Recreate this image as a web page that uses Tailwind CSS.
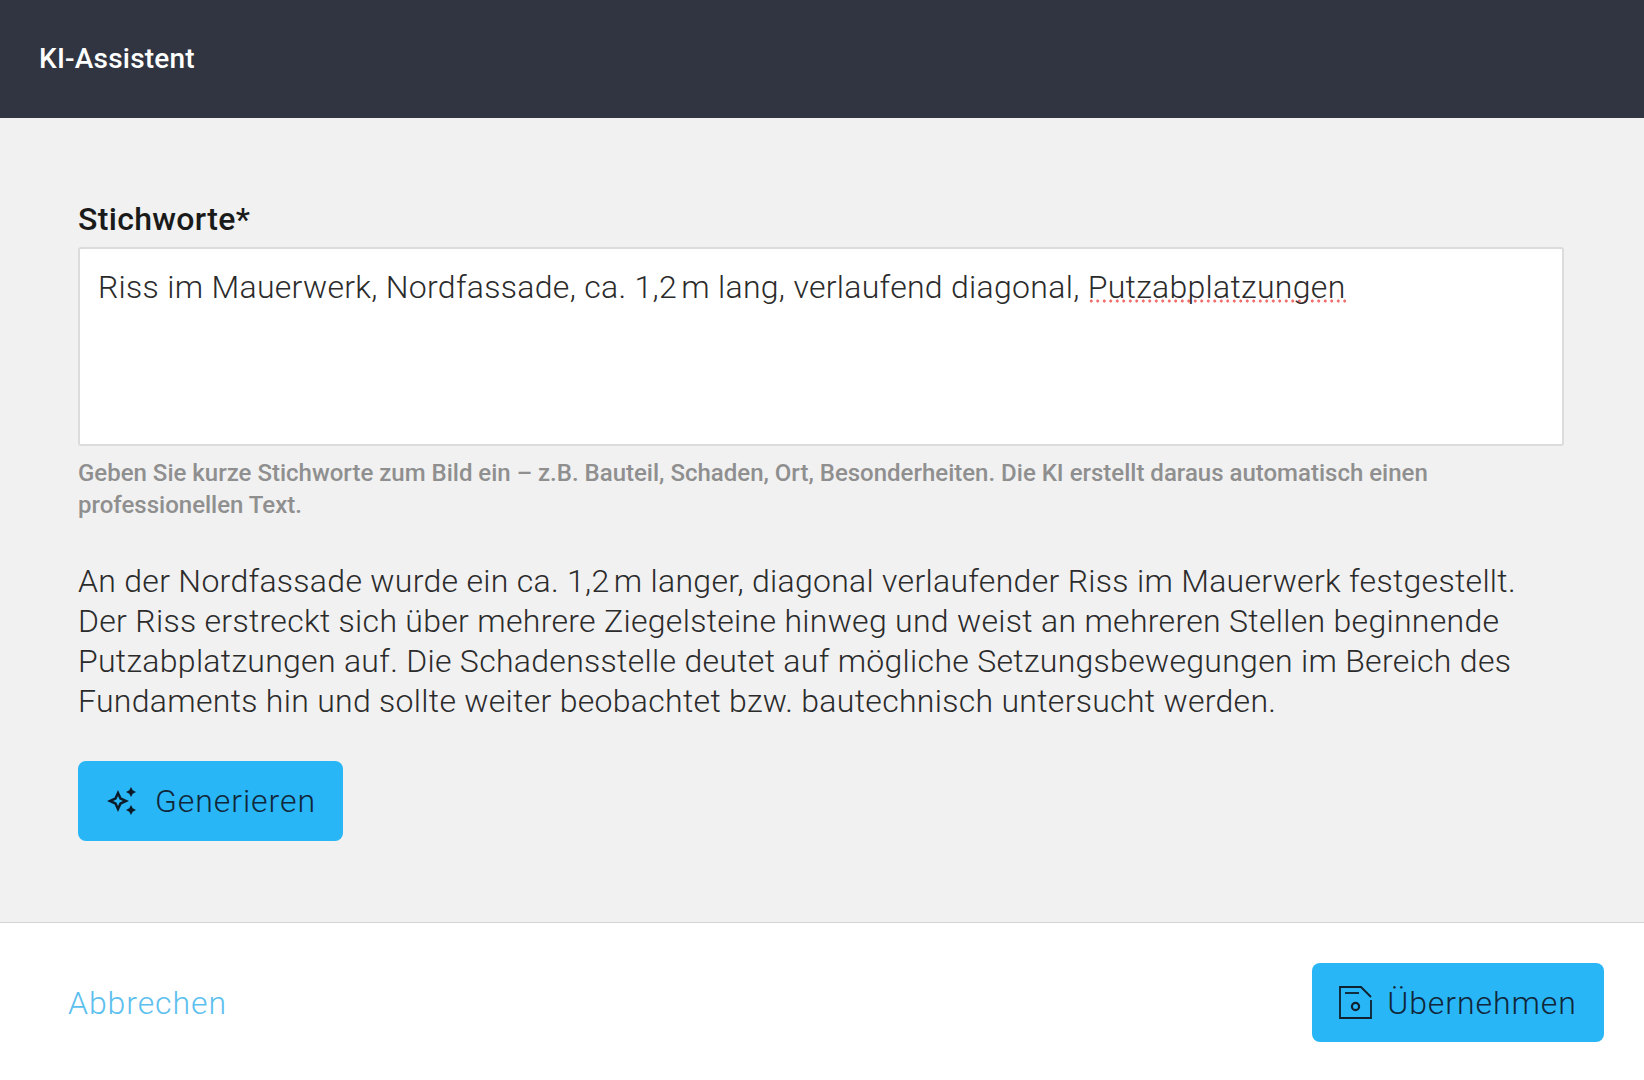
<!DOCTYPE html>
<html lang="de">
<head>
    <meta charset="UTF-8">
    <meta name="viewport" content="width=device-width, initial-scale=1.0">
    <title>KI-Assistent</title>
    <script src="https://cdn.jsdelivr.net/npm/@tailwindcss/browser@4"></script>
</head>
<body class="h-[1080px] overflow-hidden flex flex-col bg-white font-['Roboto',sans-serif]">
    <!-- Kopfzeile -->
    <header class="h-[118px] shrink-0 bg-[#313541] flex items-center px-[39px]">
        <h1 class="text-[28px] tracking-[0.0075em] font-medium text-white">KI-Assistent</h1>
    </header>

    <!-- Inhalt -->
    <main class="h-[804px] shrink-0 bg-[#f1f1f1] pl-[78px] pr-[80px] pt-[82px]">
        <label class="block text-[32px] leading-[38px] tracking-[0.01em] font-medium text-[#1a1a1a] mb-[9px]">Stichworte*</label>
        <div class="h-[199px] bg-white border-2 border-[#dcdcdc] rounded-[3px] px-[18px] pt-[18px] text-[32px] leading-[40px] tracking-[0.295px] font-light text-[#2b2b2b]">
            Riss im Mauerwerk, Nordfassade, ca. 1,2&#8239;m lang, verlaufend diagonal, <span class="bg-[radial-gradient(circle,#f26f6f_1.4px,transparent_1.8px)] bg-[length:6.5px_4px] bg-repeat-x bg-[position:0_31px]">Putzabplatzungen</span>
        </div>
        <p class="mt-[11px] text-[24px] leading-[32px] font-medium text-[#8f8f8f]">Geben Sie kurze Stichworte zum Bild ein – z.B. Bauteil, Schaden, Ort, Besonderheiten. Die KI erstellt daraus automatisch einen professionellen Text.</p>
        <p class="mt-[40px] text-[32px] leading-[40px] tracking-[0.295px] font-light text-[#2b2b2b]">An der Nordfassade wurde ein ca. 1,2&#8239;m langer, diagonal verlaufender Riss im Mauerwerk festgestellt. Der Riss erstreckt sich über mehrere Ziegelsteine hinweg und weist an mehreren Stellen beginnende Putzabplatzungen auf. Die Schadensstelle deutet auf mögliche Setzungsbewegungen im Bereich des Fundaments hin und sollte weiter beobachtet bzw. bautechnisch untersucht werden.</p>
        <button class="mt-[40px] w-[265px] h-[80px] pl-[2px] bg-[#29b6f6] rounded-[8px] flex items-center justify-center gap-[18px] text-[32px] tracking-[0.02857em] font-light text-[#10263a]">
            <svg class="w-[30px] h-[30px]" viewBox="0 0 30 30" fill="#0d1b28">
                <path d="M11 4 L14.4 11.6 L22 15 L14.4 18.4 L11 26 L7.6 18.4 L0 15 L7.6 11.6 Z M11 10 L9.4 13.4 L6 15 L9.4 16.6 L11 20 L12.6 16.6 L16 15 L12.6 13.4 Z" fill-rule="evenodd"/>
                <path d="M24 1 L25.7 4.3 L29 6 L25.7 7.7 L24 11 L22.3 7.7 L19 6 L22.3 4.3 Z"/>
                <path d="M24 19 L25.7 22.3 L29 24 L25.7 25.7 L24 29 L22.3 25.7 L19 24 L22.3 22.3 Z"/>
            </svg>
            Generieren
        </button>
    </main>

    <!-- Fußzeile -->
    <footer class="flex-1 bg-white border-t border-[#d4d4d4] flex items-center justify-between pl-[68px] pr-[40px] pt-[2px]">
        <button class="text-[32px] tracking-[0.02857em] font-light text-[#5cc0ee]">Abbrechen</button>
        <button class="w-[292px] h-[79px] bg-[#29b6f6] rounded-[8px] flex items-center justify-center gap-[15px] text-[32px] tracking-[0.02857em] font-light text-[#10263a]">
            <svg class="w-[33px] h-[33px]" viewBox="0 0 33 33" fill="none" stroke="#10202e" stroke-width="1.8">
                <path d="M32 14 V32 H1 V1 H22 L32 11"/>
                <path d="M6 7 H20"/>
                <circle cx="16.5" cy="20.5" r="3.6" stroke-width="2.2"/>
            </svg>
            Übernehmen
        </button>
    </footer>
</body>
</html>
